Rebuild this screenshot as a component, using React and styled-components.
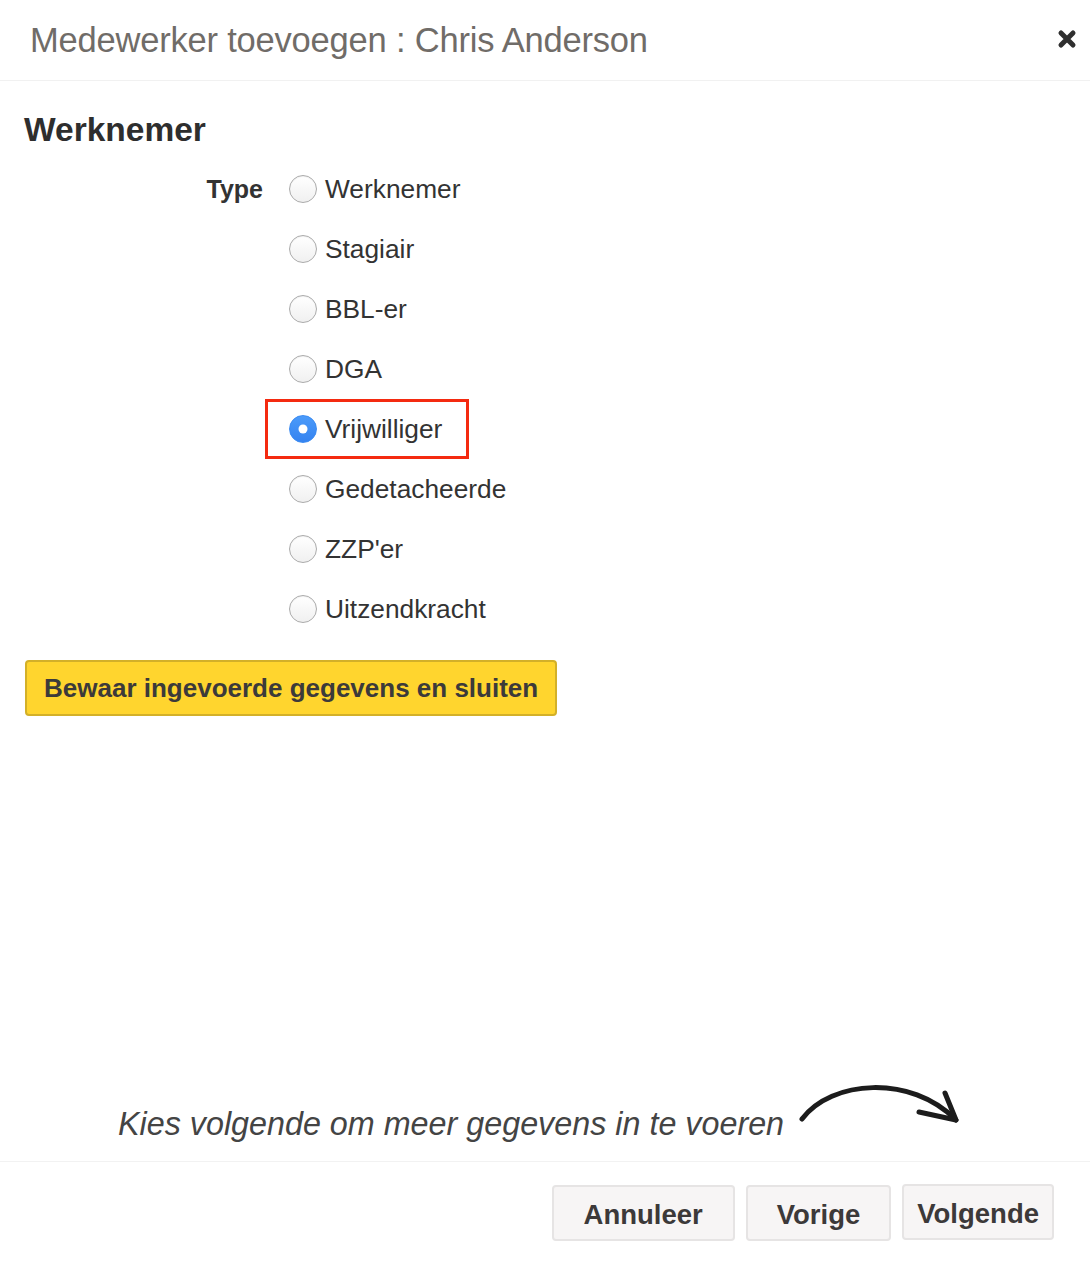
import React, { useState } from 'react';
import styled, { createGlobalStyle } from 'styled-components';

const GlobalStyle = createGlobalStyle`
  html, body {
    margin: 0;
    padding: 0;
    background: #fff;
  }
  body {
    font-family: "Liberation Sans", Arial, sans-serif;
    color: #333;
  }
`;

const types = [
  'Werknemer',
  'Stagiair',
  'BBL-er',
  'DGA',
  'Vrijwilliger',
  'Gedetacheerde',
  "ZZP'er",
  'Uitzendkracht',
];

function App() {
  const [selected, setSelected] = useState('Vrijwilliger');

  return (
    <Modal>
      <GlobalStyle />
      <Header>
        <Title>Medewerker toevoegen : Chris Anderson</Title>
        <Close aria-label="Sluiten">
          <svg width="20" height="20" viewBox="0 0 20 20">
            <path d="M4 4 L16 16 M16 4 L4 16" stroke="#2f2f2f" strokeWidth="5" strokeLinecap="round" />
          </svg>
        </Close>
      </Header>

      <Body>
        <Heading>Werknemer</Heading>
        <Form>
          <Label>Type</Label>
          <Options>
            {types.map((t) => (
              <Option
                key={t}
                $highlight={t === 'Vrijwilliger'}
                onClick={() => setSelected(t)}
              >
                <Radio $checked={selected === t} />
                <OptionText>{t}</OptionText>
              </Option>
            ))}
          </Options>
        </Form>
        <SaveButton>Bewaar ingevoerde gegevens en sluiten</SaveButton>

        <Hint>
          <HintText>Kies volgende om meer gegevens in te voeren</HintText>
          <svg width="170" height="60" viewBox="0 0 170 60">
            <path
              d="M6 37 C 35 -2, 115 -8, 160 38"
              fill="none"
              stroke="#1c1c1c"
              strokeWidth="5"
              strokeLinecap="round"
            />
            <path
              d="M149 11 L160 38 L123 30"
              fill="none"
              stroke="#1c1c1c"
              strokeWidth="5"
              strokeLinecap="round"
              strokeLinejoin="round"
            />
          </svg>
        </Hint>
      </Body>

      <Footer>
        <FooterButton>Annuleer</FooterButton>
        <FooterButton $pad="29px">Vorige</FooterButton>
        <FooterButton $pad="13px" $raise>Volgende</FooterButton>
      </Footer>
    </Modal>
  );
}

const Modal = styled.div`
  display: flex;
  flex-direction: column;
  min-height: 1270px;
  background: #fff;
`;

const Header = styled.div`
  height: 80px;
  display: flex;
  align-items: center;
  justify-content: space-between;
  padding: 0 13px 0 30px;
  border-bottom: 1px solid #f1f1f1;
`;

const Title = styled.h1`
  margin: 0;
  font-size: 34.5px;
  font-weight: 400;
  color: #706c68;
  letter-spacing: -0.2px;
`;

const Close = styled.button`
  border: 0;
  background: none;
  padding: 0;
  cursor: pointer;
  display: flex;
  margin-top: -2px;
`;

const Body = styled.div`
  flex: 1;
  display: flex;
  flex-direction: column;
  padding: 0 0 0 24px;
`;

const Heading = styled.h2`
  margin: 29px 0 9px;
  font-size: 33.5px;
  line-height: 40px;
  font-weight: 700;
  color: #2e2e2e;
`;

const Form = styled.div`
  display: grid;
  grid-template-columns: 239px auto;
  column-gap: 2px;
`;

const Label = styled.div`
  text-align: right;
  font-size: 25px;
  font-weight: 700;
  line-height: 60px;
  color: #333;
`;

const Options = styled.div`
  display: flex;
  flex-direction: column;
  align-items: flex-start;
`;

const Option = styled.label`
  box-sizing: border-box;
  height: 60px;
  display: inline-flex;
  align-items: center;
  gap: 8px;
  padding: 0 24px 0 21px;
  border: 3px solid ${(p) => (p.$highlight ? '#f42a10' : 'transparent')};
  cursor: pointer;
`;

const Radio = styled.span`
  box-sizing: border-box;
  width: 28px;
  height: 28px;
  border-radius: 50%;
  position: relative;
  flex-shrink: 0;
  border: 1px solid ${(p) => (p.$checked ? '#3a8bf2' : '#ababab')};
  background: ${(p) =>
    p.$checked
      ? 'linear-gradient(#4b9bfa, #3583f0)'
      : 'linear-gradient(#ffffff, #f0f0f0)'};
  box-shadow: ${(p) => (p.$checked ? 'none' : 'inset 0 1px 1px rgba(0,0,0,0.06)')};

  &::after {
    content: '';
    display: ${(p) => (p.$checked ? 'block' : 'none')};
    position: absolute;
    width: 9px;
    height: 9px;
    border-radius: 50%;
    background: #fff;
    left: 50%;
    top: 50%;
    transform: translate(-50%, -50%);
  }
`;

const OptionText = styled.span`
  font-size: 26.3px;
  color: #333;
`;

const SaveButton = styled.button`
  align-self: flex-start;
  margin: 21px 0 0 1px;
  height: 56px;
  padding: 0 17px;
  background: #ffd52e;
  border: 2px solid #d3b028;
  border-radius: 4px;
  font-family: "Liberation Sans", Arial, sans-serif;
  font-size: 26px;
  font-weight: 700;
  color: #3c3a3a;
  cursor: pointer;
`;

const Hint = styled.div`
  margin-top: auto;
  margin-left: 94px;
  margin-bottom: 17px;
  display: flex;
  align-items: flex-end;
  gap: 12px;

  svg {
    margin-bottom: 2px;
  }
`;

const HintText = styled.span`
  font-size: 32.3px;
  font-style: italic;
  color: #444;
  line-height: 40px;
`;

const Footer = styled.div`
  border-top: 1px solid #f2f2f2;
  display: flex;
  justify-content: flex-end;
  align-items: flex-start;
  gap: 11px;
  padding: 23px 36px 29px 0;
`;

const FooterButton = styled.button`
  height: 56px;
  padding: 3px ${(p) => p.$pad || '30px'} 0;
  margin-top: ${(p) => (p.$raise ? '-1px' : '0')};
  background: #f7f5f5;
  border: 2px solid #e6e4e4;
  border-radius: 4px;
  font-family: "Liberation Sans", Arial, sans-serif;
  font-size: 27.5px;
  font-weight: 700;
  color: #3c3939;
  cursor: pointer;
`;

export default App;
